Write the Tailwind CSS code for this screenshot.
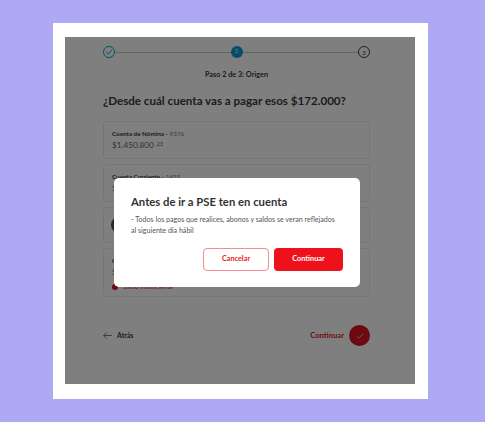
<!DOCTYPE html>
<html lang="es">
<head>
  <meta charset="UTF-8" />
  <title>Pago PSE</title>
  <script src="https://cdn.jsdelivr.net/npm/@tailwindcss/browser@4"></script>
</head>
<body class="bg-[#adaaf3] font-['Lato','Liberation_Sans',sans-serif] text-[#3a3a3a]">
  <div class="h-[422px] w-[485px] pl-[53px] pt-[23px] overflow-hidden">
    <!-- Frame -->
    <div class="w-[375px] h-[376px] bg-white pl-3 pr-[13px] pt-[14px]">
      <div class="relative w-[350px] h-[347px] bg-white overflow-hidden">

        <!-- Page behind the dialog -->
        <div class="pl-[38px] pr-[45px] pt-[9px]">
          <!-- Stepper -->
          <div class="flex items-center">
            <span class="flex size-[12px] shrink-0 items-center justify-center rounded-full border border-[#0c9ccf]">
              <svg viewBox="0 0 12 12" class="size-[8px]" fill="none" stroke="#0c9ccf" stroke-width="1.5"><path d="M2 6.5 5 9 10 3"/></svg>
            </span>
            <span class="h-px flex-1 bg-[#c8c8c8]"></span>
            <span class="flex size-[12px] shrink-0 items-center justify-center rounded-full bg-[#0c9ccf] text-[5px] text-white">2</span>
            <span class="h-px flex-1 bg-[#c8c8c8]"></span>
            <span class="flex size-[12px] shrink-0 items-center justify-center rounded-full border border-[#444] text-[6px]">3</span>
          </div>
          <p class="mt-[12px] text-center text-[7.3px] font-bold leading-[10px]">Paso 2 de 3: Origen</p>
          <h1 class="mt-[13px] text-[11.6px] font-bold leading-[16px] whitespace-nowrap">¿Desde cuál cuenta vas a pagar esos $172.000?</h1>

          <!-- Accounts -->
          <div class="mt-[12px] flex flex-col gap-[5px]">
            <div class="h-[38px] rounded-[4px] border border-[#eaeaea] px-[8px] pt-[7px]">
              <p class="text-[6.3px] leading-[9px]"><b>Cuenta de Nómina -</b> <span class="text-[#777]">9376</span></p>
              <p class="mt-[2px] text-[8.2px] leading-[11px] text-[#666]">$1.450.800 <sup class="text-[5px]">,23</sup></p>
            </div>
            <div class="h-[38px] rounded-[4px] border border-[#eaeaea] px-[8px] pt-[7px]">
              <p class="text-[6.3px] leading-[9px]"><b>Cuenta Corriente -</b> <span class="text-[#777]">1435</span></p>
              <p class="mt-[2px] text-[8.2px] leading-[11px] text-[#666]">$</p>
            </div>
            <div class="flex h-[36px] items-center rounded-[4px] border border-[#eaeaea] pl-[7px]">
              <span class="size-[16px] rounded-full bg-[#3a5666]"></span>
            </div>
            <div class="h-[49px] rounded-[4px] border border-[#eaeaea] px-[8px] pt-[7px]">
              <p class="text-[6.3px] font-bold leading-[9px]">C</p>
              <p class="mt-[2px] text-[8.2px] leading-[11px] text-[#666]">$</p>
              <p class="mt-[4px] flex items-center gap-[5px] text-[6.5px] leading-[9px] text-[#d8161f]">
                <span class="size-[6px] rounded-full bg-[#d8161f]"></span>Saldo insuficiente
              </p>
            </div>
          </div>

          <!-- Footer actions -->
          <div class="mt-[28px] flex items-center justify-between">
            <div class="flex items-center gap-[5px]">
              <svg viewBox="0 0 10 8" class="h-[7px] w-[9px]" fill="none" stroke="#444" stroke-width=".8"><path d="M4 .5.7 4 4 7.5M.7 4H10"/></svg>
              <span class="text-[7px] font-bold">Atrás</span>
            </div>
            <div class="flex items-center gap-[5px]">
              <span class="text-[7.6px] font-bold text-[#d8161f]">Continuar</span>
              <span class="flex size-[21px] items-center justify-center rounded-full bg-[#d8161f]">
                <svg viewBox="0 0 10 8" class="h-[6px] w-[8px]" fill="none" stroke="white" stroke-width=".8"><path d="M1 4.5 3.5 7 9 1"/></svg>
              </span>
            </div>
          </div>
        </div>

        <!-- Backdrop -->
        <div class="absolute inset-0 bg-black/50"></div>

        <!-- Dialog -->
        <div class="absolute left-[49px] top-[141px] h-[109px] w-[246px] rounded-[5px] bg-white px-[17px] pt-[16px]">
          <h2 class="text-[11.3px] font-bold leading-[16px] text-[#333]">Antes de ir a PSE ten en cuenta</h2>
          <p class="mt-[4px] text-[7.1px] leading-[11px] whitespace-nowrap text-[#555]">- Todos los pagos que realices, abonos y saldos se veran reflejados<br />al siguiente día hábil</p>
          <div class="mt-[12px] flex justify-end gap-[5px]">
            <button class="h-[23px] w-[66px] rounded-[4px] border border-[#f98a8f] text-[7.3px] font-bold text-[#ed1c24]">Cancelar</button>
            <button class="h-[23px] w-[69px] rounded-[4px] bg-[#ee111c] text-[7.3px] font-bold text-white">Continuar</button>
          </div>
        </div>
      </div>
    </div>
  </div>
</body>
</html>
